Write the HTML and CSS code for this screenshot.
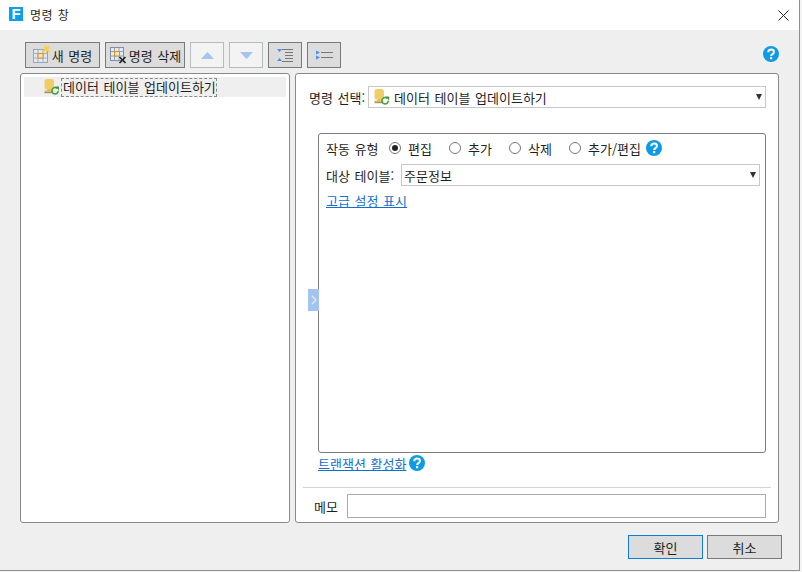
FILE: index.html
```html
<!DOCTYPE html>
<html lang="ko">
<head>
<meta charset="utf-8">
<title>명령 창</title>
<link rel="stylesheet" href="styles.css">
</head>
<body>
<svg class="defs" width="0" height="0">
  <defs>
    <symbol id="help" viewBox="0 0 16 16">
      <circle cx="8" cy="8" r="8" fill="#0f9ae6"/>
      <path d="M5.2 6.2C5.3 4.6 6.5 3.6 8.1 3.6c1.600 0 2.800 1 2.800 2.300 0 2.300-2.800 2.100-2.800 4.200" fill="none" stroke="#fff" stroke-width="2"/>
      <rect x="7" y="11.100" width="2.200" height="2.100" fill="#fff"/>
    </symbol>
    <symbol id="cmd" viewBox="0 0 16 16">
      <rect x="0.500" y="0" width="9.500" height="10.500" rx="2.500" fill="#f0cd66"/>
      <path d="M3.500 10h3v1.500h3v1.500H.5v-1.500h3z" fill="#dcbb58"/>
      <path d="M0.500 13h8v1.200h-8z" fill="#a39460"/>
      <path d="M14.300 11.800a3.200 3.200 0 1 1-1-2.400" fill="none" stroke="#3f9c35" stroke-width="1.500"/>
      <path d="M11 7.500h4v3.800z" fill="#3f9c35"/>
    </symbol>
  </defs>
</svg>
<div class="window">
  <header class="titlebar">
    <span class="logo">F</span>
    <span class="title">명령 창</span>
    <svg class="close" width="11" height="11" viewBox="0 0 11 11"><path d="M.5.500l10 10M10.500.500l-10 10" stroke="#222" stroke-width="1" fill="none"/></svg>
  </header>
  <div class="body">
    <div class="toolbar">
      <button class="tb tb-new">
        <svg width="19" height="18" viewBox="0 0 19 18">
          <rect x=".5" y="4.500" width="14" height="13" fill="#dfe8f3" stroke="#94a3b5"/>
          <path d="M.5 8.500h14M.5 13h14M5 4.500v13M10 4.500v13" stroke="#a3b1c2" fill="none"/>
          <rect x="5" y="8.500" width="5" height="4.500" fill="#fbe6c6" stroke="#e68a1d"/>
          <path d="M13.500 0v8M9.500 4h8M10.500 1l6 6M16.500 1l-6 6" stroke="#f8cf4f" stroke-width="1.200"/>
        </svg>
        <span>새 명령</span>
      </button>
      <button class="tb tb-del">
        <svg width="19" height="18" viewBox="0 0 19 18">
          <rect x=".5" y=".5" width="13" height="13" fill="#e2eaf4" stroke="#7f8ea3"/>
          <path d="M.5 4.500h13M.5 9h13M4.500.5v13M9 .5v13" stroke="#93a2b5" fill="none"/>
          <rect x="4.500" y="4.500" width="5" height="4.500" fill="#fbe6c6" stroke="#e68a1d"/>
          <path d="M9.500 10l6 6M15.500 10l-6 6" stroke="#222" stroke-width="1.700"/>
        </svg>
        <span>명령 삭제</span>
      </button>
      <button class="tb tb-icon off">
        <svg width="13" height="7" viewBox="0 0 13 7"><path d="M6.500 0L13 7H0z" fill="#a5c4ef"/></svg>
      </button>
      <button class="tb tb-icon off">
        <svg width="13" height="7" viewBox="0 0 13 7"><path d="M0 0h13L6.500 7z" fill="#a5c4ef"/></svg>
      </button>
      <button class="tb tb-icon">
        <svg width="16" height="13" viewBox="0 0 16 13">
          <path d="M5 .5h11M8 3.500h8M8 6.500h8M8 9.500h8M5 12.500h11" stroke="#777" stroke-width="1" fill="none"/>
          <path d="M0 0h5L2.500 3zM0 12h5L2.500 9z" fill="#4b8df0"/>
        </svg>
      </button>
      <button class="tb tb-icon">
        <svg width="17" height="10" viewBox="0 0 17 10">
          <path d="M5 2.500h12M5 7.500h12" stroke="#777" stroke-width="1" fill="none"/>
          <path d="M0 .5l4 2-4 2zM0 5.500l4 2-4 2z" fill="#4b8df0"/>
        </svg>
      </button>
      <svg class="tb-help" width="16" height="16"><use href="#help"/></svg>
    </div>
    <div class="panes">
      <aside class="pane tree">
        <div class="tree-row">
          <svg class="row-icon" width="16" height="16"><use href="#cmd"/></svg>
          <span class="tree-label">데이터 테이블 업데이트하기</span>
        </div>
      </aside>
      <main class="pane detail">
        <div class="pick-row">
          <span class="pick-label">명령 선택:</span>
          <div class="select pick-select">
            <svg class="row-icon" width="16" height="16"><use href="#cmd"/></svg>
            <span class="select-text">데이터 테이블 업데이트하기</span>
            <span class="caret"></span>
          </div>
        </div>
        <div class="group-wrap">
          <span class="splitter"><svg width="6" height="10" viewBox="0 0 6 10"><path d="M1 1l4 4-4 4" stroke="#e4edfb" stroke-width="1.300" fill="none"/></svg></span>
          <section class="group">
            <div class="type-row">
              <span class="type-label">작동 유형</span>
              <span class="radio-item r1"><span class="radio checked"></span>편집</span>
              <span class="radio-item r2"><span class="radio"></span>추가</span>
              <span class="radio-item r3"><span class="radio"></span>삭제</span>
              <span class="radio-item r4"><span class="radio"></span>추가/편집</span>
              <svg class="help-inline" width="16" height="16"><use href="#help"/></svg>
            </div>
            <div class="table-row">
              <span class="table-label">대상 테이블:</span>
              <div class="select table-select">
                <span class="select-text">주문정보</span>
                <span class="caret"></span>
              </div>
            </div>
            <a class="link adv" href="#">고급 설정 표시</a>
          </section>
        </div>
        <div class="tx-row">
          <a class="link" href="#">트랜잭션 활성화</a>
          <svg width="16" height="16"><use href="#help"/></svg>
        </div>
        <div class="memo-row">
          <span class="memo-label">메모</span>
          <div class="memo-input"></div>
        </div>
      </main>
    </div>
    <footer class="actions">
      <button class="btn primary">확인</button>
      <button class="btn">취소</button>
    </footer>
  </div>
</div>
</body>
</html>
```
FILE: styles.css
```css
* { box-sizing: border-box; }
html, body { margin: 0; padding: 0; background: #f4f4f4; }
body {
  width: 802px;
  height: 572px;
  overflow: hidden;
  font-family: "Noto Sans CJK KR", "Noto Sans", sans-serif;
  font-size: 13px;
  word-spacing: 1px;
  color: #1f1f1f;
}
.defs { position: absolute; }
.window {
  width: 800px;
  height: 571px;
  border-right: 1px solid #8e8e8e;
  border-bottom: 1px solid #8e8e8e;
  display: flex;
  flex-direction: column;
  background: #efefef;
}
.titlebar {
  height: 30px;
  flex: none;
  background: #fff;
  display: flex;
  align-items: center;
  padding: 0 10px 2px 9px;
}
.logo {
  width: 14px;
  height: 14px;
  background: #0e9fea;
  color: #fff;
  font: bold 15px/14px "Liberation Sans", sans-serif;
  text-align: center;
  margin-right: 7px;
}
.title { font-size: 12px; letter-spacing: 0.4px; flex: 1; }
.close { margin-top: 2px; }
.body {
  flex: 1;
  display: flex;
  flex-direction: column;
  padding: 12px 17px 0 20px;
}
.toolbar {
  height: 26px;
  display: flex;
  gap: 5px;
  padding-left: 5px;
  align-items: center;
  flex: none;
}
.tb {
  height: 26px;
  padding: 0;
  border: 1px solid #7a7a7a;
  background: #dcdcdc;
  display: flex;
  align-items: center;
  justify-content: center;
  font: inherit;
  color: inherit;
  word-spacing: inherit;
}
.tb-new { width: 75px; }
.tb-new svg { margin-top: -2px; }
.tb-del { width: 80px; padding-left: 1px; }
.tb-del svg { margin-top: 2px; }
.tb-icon { width: 34px; }
.tb-icon.off { background: #f3f3f3; border-color: #b4bcbc; }
.tb-help { margin-left: auto; margin-right: 3px; margin-bottom: 2px; }
.panes {
  margin-top: 5px;
  height: 450px;
  width: 759px;
  flex: none;
  display: flex;
  gap: 5px;
}
.pane {
  background: #fff;
  border: 1px solid #8a8a8a;
  border-radius: 3px;
}
.tree { width: 270px; flex: none; padding: 3px; }
.tree-row {
  height: 20px;
  background: #efefef;
  display: flex;
  align-items: center;
  padding-left: 20px;
}
.row-icon { flex: none; }
.tree-label {
  margin-left: 1px;
  height: 19px;
  width: 156px;
  border: 1px dashed #8a8a8a;
  line-height: 15px;
  padding-left: 1px;
  white-space: nowrap;
}
.detail {
  flex: 1;
  min-width: 0;
  display: flex;
  flex-direction: column;
  padding: 12px 0 0 13px;
}
.pick-row { display: flex; align-items: center; height: 22px; flex: none; }
.pick-label { width: 59px; flex: none; white-space: nowrap; }
.select {
  height: 22px;
  border: 1px solid #c8c8c8;
  background: #fff;
  display: flex;
  align-items: center;
  position: relative;
}
.pick-select { width: 398px; padding-left: 5px; flex: none; }
.select-text { margin-left: 4px; white-space: nowrap; }
.caret {
  position: absolute;
  right: 3px;
  top: 7px;
  width: 0;
  height: 0;
  border-left: 3.500px solid transparent;
  border-right: 3.500px solid transparent;
  border-top: 6px solid #333;
}
.group-wrap {
  position: relative;
  margin-top: 25px;
  flex: none;
  padding-left: 9px;
}
.splitter {
  position: absolute;
  left: -1px;
  top: 156px;
  width: 11px;
  height: 22px;
  background: #a5c3ef;
  display: flex;
  align-items: center;
  justify-content: center;
}
.group {
  height: 320px;
  width: 448px;
  border: 1px solid #7c7c7c;
  border-radius: 3px;
  padding: 4px 5px 0 7px;
  background: #fff;
}
.type-row { display: flex; align-items: center; height: 20px; white-space: nowrap; }
.type-label { width: 63px; flex: none; }
.radio-item { display: flex; align-items: center; gap: 7px; width: 60px; flex: none; }
.radio {
  width: 12px;
  height: 12px;
  border: 1px solid #777;
  border-radius: 50%;
  flex: none;
  background: #fff;
  position: relative;
}
.radio.checked::after {
  content: "";
  position: absolute;
  left: 2px;
  top: 2px;
  width: 6px;
  height: 6px;
  border-radius: 50%;
  background: #222;
}
.r4 { width: 77px; }
.help-inline { flex: none; }
.table-row { display: flex; align-items: center; margin-top: 6px; }
.table-label { width: 75px; flex: none; white-space: nowrap; }
.table-select { width: 359px; flex: none; }
.table-select .select-text { margin-left: 2px; }
.link { color: #1170cf; text-decoration: underline; white-space: nowrap; }
.adv { display: block; margin-top: 6px; line-height: 18px; }
.tx-row {
  display: flex;
  align-items: center;
  gap: 3px;
  padding-left: 9px;
  height: 20px;
  flex: none;
}
.memo-row {
  margin: 14px 0 0 -6px;
  width: 468px;
  border-top: 1px solid #d4d4d4;
  padding: 1px 0 0 11px;
  display: flex;
  align-items: center;
  height: 36px;
  flex: none;
}
.memo-label { width: 33px; flex: none; }
.memo-input { width: 419px; height: 24px; border: 1px solid #ababab; background: #fff; flex: none; }
.actions {
  display: flex;
  justify-content: flex-end;
  gap: 4px;
  margin-top: 12px;
  flex: none;
}
.btn {
  width: 75px;
  height: 24px;
  padding: 0;
  border: 1px solid #7a7a7a;
  background: #dcdcdc;
  font: inherit;
  color: inherit;
}
.btn.primary { border-color: #0f7dd4; }
```
